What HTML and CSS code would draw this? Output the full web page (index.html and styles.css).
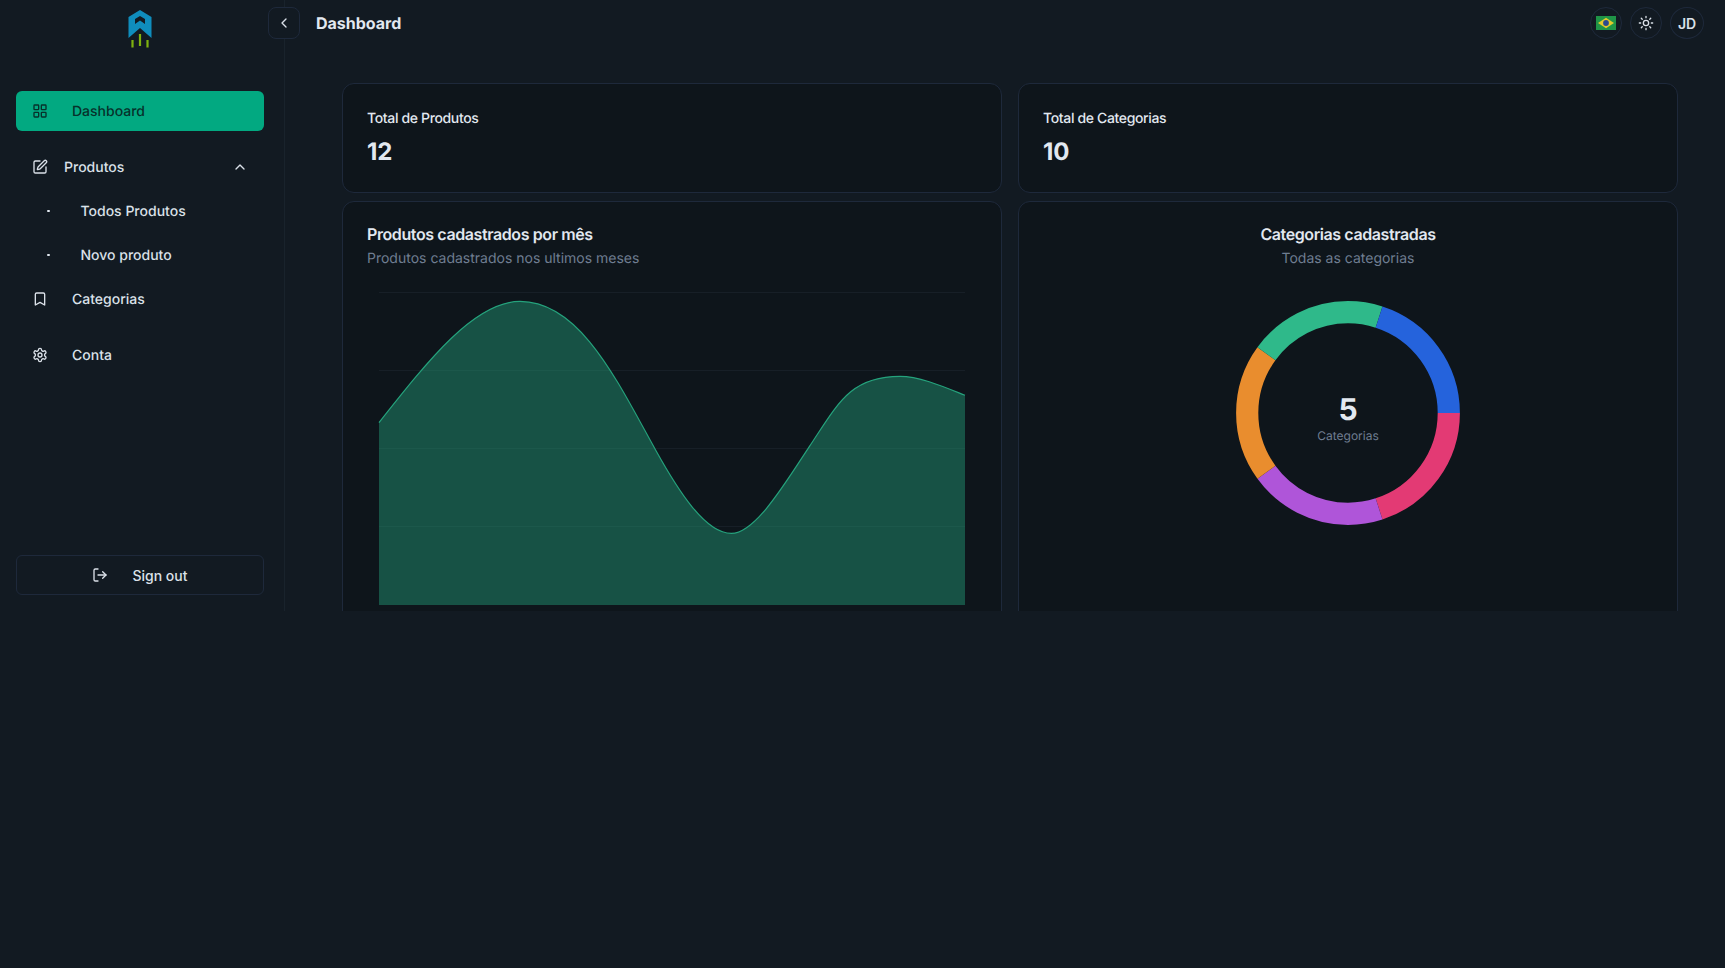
FILE: index.html
```html
<!DOCTYPE html>
<html lang="pt-BR">
<head>
<meta charset="utf-8">
<title>Dashboard</title>
<link rel="stylesheet" href="styles.css">
</head>
<body>
<div class="app">
  <aside class="sidebar">
    <div class="logo">
      <svg width="60" height="56" viewBox="110 0 60 56">
        <path class="logo-body" fill-rule="evenodd" d="M140 10 151.500 17V38L140 28 128.500 38V17ZM140 16 135 19V24L140 20.500 145 24V19Z"/>
        <path class="logo-jets" d="M132.500 40V47.500M140 34V46M147.500 40V47.500"/>
      </svg>
    </div>
    <nav class="nav">
      <a class="nav-item nav-item-active nav-item-spaced">
        <svg class="icon" viewBox="0 0 24 24"><rect x="3" y="3" width="7" height="7" rx="1"/><rect x="14" y="3" width="7" height="7" rx="1"/><rect x="14" y="14" width="7" height="7" rx="1"/><rect x="3" y="14" width="7" height="7" rx="1"/></svg>
        <span>Dashboard</span>
      </a>
      <a class="nav-item nav-item-group">
        <svg class="icon" viewBox="0 0 24 24"><path d="M12 3H5a2 2 0 0 0-2 2v14a2 2 0 0 0 2 2h14a2 2 0 0 0 2-2v-7"/><path d="M18.375 2.625a1 1 0 0 1 3 3l-9.013 9.014a2 2 0 0 1-.853.505l-2.873.84a.5.5 0 0 1-.62-.62l.84-2.873a2 2 0 0 1 .506-.852z"/></svg>
        <span>Produtos</span>
        <svg class="icon icon-chevron" viewBox="0 0 24 24"><path d="m18 15-6-6-6 6"/></svg>
      </a>
      <a class="nav-sub"><i class="dot"></i><span>Todos Produtos</span></a>
      <a class="nav-sub"><i class="dot"></i><span>Novo produto</span></a>
      <a class="nav-item nav-item-spaced">
        <svg class="icon" viewBox="0 0 24 24"><path d="m19 21-7-4-7 4V5a2 2 0 0 1 2-2h10a2 2 0 0 1 2 2v16z"/></svg>
        <span>Categorias</span>
      </a>
      <a class="nav-item">
        <svg class="icon" viewBox="0 0 24 24"><path d="M12.220 2h-.44a2 2 0 0 0-2 2v.18a2 2 0 0 1-1 1.730l-.43.25a2 2 0 0 1-2 0l-.15-.08a2 2 0 0 0-2.730.73l-.22.38a2 2 0 0 0 .73 2.730l.15.1a2 2 0 0 1 1 1.720v.51a2 2 0 0 1-1 1.740l-.15.09a2 2 0 0 0-.73 2.730l.22.38a2 2 0 0 0 2.730.73l.15-.08a2 2 0 0 1 2 0l.43.25a2 2 0 0 1 1 1.730V20a2 2 0 0 0 2 2h.44a2 2 0 0 0 2-2v-.18a2 2 0 0 1 1-1.730l.43-.25a2 2 0 0 1 2 0l.15.08a2 2 0 0 0 2.730-.73l.22-.39a2 2 0 0 0-.73-2.730l-.15-.08a2 2 0 0 1-1-1.740v-.5a2 2 0 0 1 1-1.740l.15-.09a2 2 0 0 0 .73-2.730l-.22-.38a2 2 0 0 0-2.730-.73l-.15.08a2 2 0 0 1-2 0l-.43-.25a2 2 0 0 1-1-1.730V4a2 2 0 0 0-2-2z"/><circle cx="12" cy="12" r="3"/></svg>
        <span>Conta</span>
      </a>
    </nav>
    <button class="signout">
      <svg class="icon" viewBox="0 0 24 24"><path d="M9 21H5a2 2 0 0 1-2-2V5a2 2 0 0 1 2-2h4"/><path d="m16 17 5-5-5-5"/><path d="M21 12H9"/></svg>
      <span>Sign out</span>
    </button>
  </aside>
  <div class="main">
    <header class="topbar">
      <button class="collapse">
        <svg class="icon" viewBox="0 0 24 24"><path d="m15 18-6-6 6-6"/></svg>
      </button>
      <h1 class="page-title">Dashboard</h1>
      <div class="top-actions">
        <button class="round">
          <svg class="flag" viewBox="0 0 20 14"><rect width="20" height="14" fill="#1f9447"/><path d="M10 1.800 18 7 10 12.200 2 7Z" fill="#e3c92c"/><circle cx="10" cy="7" r="2.900" fill="#2b4a8f"/></svg>
        </button>
        <button class="round">
          <svg class="icon" viewBox="0 0 24 24"><circle cx="12" cy="12" r="4"/><path d="M12 2v2M12 20v2M4.930 4.930l1.410 1.410M17.660 17.660l1.410 1.410M2 12h2M20 12h2M6.340 17.660l-1.410 1.410M19.070 4.930l-1.410 1.410"/></svg>
        </button>
        <button class="round round-user">JD</button>
      </div>
    </header>
    <main class="content">
      <section class="card stat">
        <h2 class="stat-label">Total de Produtos</h2>
        <p class="stat-value">12</p>
      </section>
      <section class="card stat">
        <h2 class="stat-label">Total de Categorias</h2>
        <p class="stat-value">10</p>
      </section>
      <section class="card panel">
        <h2 class="panel-title">Produtos cadastrados por mês</h2>
        <p class="panel-sub">Produtos cadastrados nos ultimos meses</p>
        <svg class="area-chart" width="610" height="340" viewBox="367 280 610 340">
          <path class="grid-line" d="M379 292.500H965M379 370.500H965M379 448.500H965M379 526.500H965"/>
          <path class="area-fill" d="M379 422.600C429 359.200 475 301.400 520 301.400C580 301.400 617 380.600 655.600 450C677.600 489.600 705 533.400 731.400 533.400C755 533.400 784.300 484.700 809.300 446.600C838 403.600 850 376.300 900 376.300C920 376.300 945 387.300 965 395.300V605H379Z"/>
          <path class="area-line" d="M379 422.600C429 359.200 475 301.400 520 301.400C580 301.400 617 380.600 655.600 450C677.600 489.600 705 533.400 731.400 533.400C755 533.400 784.300 484.700 809.300 446.600C838 403.600 850 376.300 900 376.300C920 376.300 945 387.300 965 395.300"/>
        </svg>
      </section>
      <section class="card panel panel-center">
        <h2 class="panel-title">Categorias cadastradas</h2>
        <p class="panel-sub">Todas as categorias</p>
        <div class="donut">
          <svg width="224" height="224" viewBox="0 0 224 224">
            <g class="donut-ring">
              <circle class="seg seg-1" cx="112" cy="112" r="100.800" pathLength="5"/>
              <circle class="seg seg-2" cx="112" cy="112" r="100.800" pathLength="5"/>
              <circle class="seg seg-3" cx="112" cy="112" r="100.800" pathLength="5"/>
              <circle class="seg seg-4" cx="112" cy="112" r="100.800" pathLength="5"/>
              <circle class="seg seg-5" cx="112" cy="112" r="100.800" pathLength="5"/>
            </g>
          </svg>
          <div class="donut-label">
            <strong>5</strong>
            <span>Categorias</span>
          </div>
        </div>
      </section>
    </main>
  </div>
</div>
</body>
</html>
```
FILE: styles.css
```css
* { box-sizing: border-box; }
html, body { height: 100%; }
body {
  margin: 0;
  background: #121a22;
  color: #e2e8f0;
  font-family: Inter, "Liberation Sans", sans-serif;
  font-size: 14px;
  text-rendering: geometricPrecision;
}
button { font: inherit; color: inherit; background: none; cursor: pointer; }
h1, h2, p { margin: 0; }
.app { display: flex; height: 611px; overflow: hidden; }
.icon {
  width: 16px; height: 16px; flex: none;
  fill: none; stroke: currentColor; stroke-width: 2;
  stroke-linecap: round; stroke-linejoin: round;
}
.sidebar {
  width: 285px; flex: none;
  display: flex; flex-direction: column;
  padding: 0 20px 16px 16px;
  border-right: 1px solid #19232c;
}
.logo { height: 91px; display: flex; justify-content: center; align-items: flex-start; }
.logo-body { fill: #0f8dbd; }
.logo-jets { fill: none; stroke: #7fb20f; stroke-width: 2.200; }
.nav { display: flex; flex-direction: column; gap: 4px; }
.nav-item, .nav-sub {
  height: 40px; display: flex; align-items: center;
  padding-left: 16px; border-radius: 6px;
  font-weight: 500; color: #dbe1e9;
}
.nav-item { gap: 24px; }
.nav-item-spaced { margin-bottom: 12px; }
.nav-item-group { gap: 16px; }
.icon-chevron { margin-left: auto; margin-right: 16px; }
.nav-item-active { background: #02a981; color: #07312b; }
.nav-sub { padding-left: 31px; gap: 31px; }
.dot { width: 2.500px; height: 2.500px; border-radius: 50%; background: #e2e8f0; flex: none; }
.signout {
  margin-top: auto; height: 40px;
  display: flex; align-items: center; justify-content: center; gap: 24px;
  background: none; border: 1px solid #1e293b; border-radius: 6px;
  font-weight: 500; color: #dbe1e9;
}
.main { flex: 1; min-width: 0; display: flex; flex-direction: column; }
.topbar {
  height: 50px; flex: none;
  display: flex; align-items: flex-start; gap: 16px;
  padding: 7px 21px 0 0; margin-left: -17px;
  position: relative;
}
.collapse {
  width: 32px; height: 32px;
  display: flex; align-items: center; justify-content: center;
  border: 1px solid #1e293b; border-radius: 8px;
  background: #121a22; color: #dbe1e9;
}
.page-title { font-size: 16px; font-weight: 700; line-height: 32px; color: #e2e8f0; }
.top-actions { margin-left: auto; display: flex; align-items: center; gap: 8px; }
.round {
  width: 32px; height: 32px; padding: 0;
  display: flex; align-items: center; justify-content: center;
  border: 1px solid #1e293b; border-radius: 50%;
  color: #dbe1e9;
}
.round-user { width: 34px; font-weight: 600; font-size: 14px; }
.flag { width: 20px; height: 14px; }
.content {
  flex: 1; min-height: 0; overflow: hidden;
  display: grid; grid-template-columns: 660px 660px; grid-template-rows: 110px 1fr;
  column-gap: 16px; row-gap: 8px;
  padding: 33px 0 0 57px;
}
.card { background: #0e151b; border: 1px solid #1e293b; border-radius: 12px; }
.stat { padding: 25px 24px 24px; }
.stat-label { font-size: 14px; font-weight: 500; letter-spacing: -0.025em; line-height: 20px; color: #e2e8f0; }
.stat-value { font-size: 24px; font-weight: 700; line-height: 32px; margin-top: 7px; color: #e2e8f0; }
.panel { height: 500px; padding: 23px 24px 24px; }
.panel-center { text-align: center; }
.panel-title { font-size: 16px; font-weight: 600; letter-spacing: -0.025em; line-height: 18px; color: #e2e8f0; }
.panel-sub { font-size: 14px; line-height: 20px; margin-top: 6px; color: #6f7d91; }
.area-chart { display: block; margin-top: 11px; }
.grid-line { stroke: #171f27; stroke-width: 1; fill: none; }
.area-fill { fill: #25a27c; fill-opacity: 0.44; }
.area-line { fill: none; stroke: #25a27c; stroke-width: 1.200; }
.donut { position: relative; width: 224px; height: 224px; margin: 32px auto 0; }
.donut svg { display: block; }
.seg { fill: none; stroke-width: 22.200; stroke-dasharray: 1 4; }
.seg-1 { stroke: #e33a74; stroke-dashoffset: 0; }
.seg-2 { stroke: #af55d9; stroke-dashoffset: -1; }
.seg-3 { stroke: #e98d2e; stroke-dashoffset: -2; }
.seg-4 { stroke: #2fb98a; stroke-dashoffset: -3; }
.seg-5 { stroke: #2563dc; stroke-dashoffset: -4; }
.donut-label {
  position: absolute; inset: 0;
  display: flex; flex-direction: column; align-items: center; justify-content: center;
  padding-top: 10px;
}
.donut-label strong { font-size: 30px; font-weight: 700; line-height: 36px; color: #e2e8f0; }
.donut-label span { font-size: 12px; line-height: 16px; color: #6f7d91; }
```
